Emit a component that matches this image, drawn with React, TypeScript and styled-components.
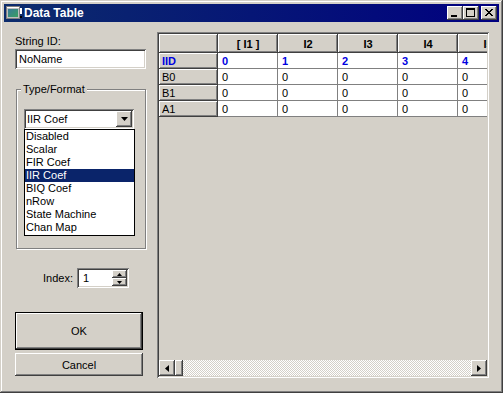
import React from "react";
import styled, { createGlobalStyle, css } from "styled-components";

const GlobalStyle = createGlobalStyle`
  html, body {
    margin: 0;
    padding: 0;
    background: #d4d0c8;
  }
  body {
    font-family: "Liberation Sans", Arial, sans-serif;
    font-size: 11px;
    color: #000;
  }
  * {
    box-sizing: border-box;
  }
`;

const raised = css`
  background: #d4d0c8;
  box-shadow: inset -1px -1px #404040, inset 1px 1px #fff,
    inset -2px -2px #808080, inset 2px 2px #d4d0c8;
`;

const sunken = css`
  box-shadow: inset 1px 1px #808080, inset -1px -1px #fff,
    inset 2px 2px #404040, inset -2px -2px #d4d0c8;
`;

const typeList = [
  "Disabled",
  "Scalar",
  "FIR Coef",
  "IIR Coef",
  "BIQ Coef",
  "nRow",
  "State Machine",
  "Chan Map",
];

const columns = ["[ I1 ]", "I2", "I3", "I4", "I5"];

const rows = [
  { label: "IID", values: ["0", "1", "2", "3", "4"], index: true },
  { label: "B0", values: ["0", "0", "0", "0", "0"] },
  { label: "B1", values: ["0", "0", "0", "0", "0"] },
  { label: "A1", values: ["0", "0", "0", "0", "0"] },
];

function AppIcon() {
  return (
    <svg width="16" height="16" viewBox="0 0 16 16">
      <rect x="0.5" y="1.5" width="13" height="12" fill="#c0c0c0" stroke="#808080" />
      <rect x="1" y="2" width="12" height="1" fill="#fff" />
      <defs>
        <linearGradient id="ig" x1="0" y1="0" x2="1" y2="1">
          <stop offset="0" stopColor="#3a7a9a" />
          <stop offset="1" stopColor="#3aa060" />
        </linearGradient>
      </defs>
      <rect x="2" y="4" width="10" height="8" fill="url(#ig)" />
      <rect x="14" y="3" width="2" height="6" fill="#fff" />
      <rect x="14" y="11" width="2" height="2" fill="#000" />
    </svg>
  );
}

export default function App() {
  return (
    <>
      <GlobalStyle />
      <Window>
        <TitleBar>
          <AppIcon />
          <Title>Data Table</Title>
          <TitleButtons>
            <TitleButton>
              <svg width="16" height="14" viewBox="0 0 16 14">
                <rect x="4" y="9" width="6" height="2" fill="#000" />
              </svg>
            </TitleButton>
            <TitleButton>
              <svg width="16" height="14" viewBox="0 0 16 14">
                <rect x="3.5" y="2.5" width="8" height="8" fill="none" stroke="#000" />
                <rect x="3" y="2" width="9" height="2" fill="#000" />
              </svg>
            </TitleButton>
            <TitleButton $close>
              <svg width="16" height="14" viewBox="0 0 16 14">
                <path d="M4 3 L11 10 M5 3 L12 10 M11 3 L4 10 M12 3 L5 10" stroke="#000" strokeWidth="1" />
              </svg>
            </TitleButton>
          </TitleButtons>
        </TitleBar>

        <Content>
          <LeftColumn>
            <FieldLabel>String ID:</FieldLabel>
            <TextBox>NoName</TextBox>

            <GroupBox>
              <Legend>Type/Format</Legend>
              <Combo>
                <ComboText>IIR Coef</ComboText>
                <ArrowButton $w={16} $h={16}>
                  <svg width="7" height="4" viewBox="0 0 7 4">
                    <path d="M0 0 H7 L3.5 4 Z" fill="#000" />
                  </svg>
                </ArrowButton>
              </Combo>
              <DropList>
                {typeList.map((t) => (
                  <ListItem key={t} $selected={t === "IIR Coef"}>
                    {t}
                  </ListItem>
                ))}
              </DropList>
            </GroupBox>

            <IndexRow>
              <span>Index:</span>
              <SpinBox>
                <SpinText>1</SpinText>
                <SpinButtons>
                  <ArrowButton $w={15} $h={8}>
                    <svg width="5" height="3" viewBox="0 0 5 3">
                      <path d="M0 3 H5 L2.5 0 Z" fill="#000" />
                    </svg>
                  </ArrowButton>
                  <ArrowButton $w={15} $h={8}>
                    <svg width="5" height="3" viewBox="0 0 5 3">
                      <path d="M0 0 H5 L2.5 3 Z" fill="#000" />
                    </svg>
                  </ArrowButton>
                </SpinButtons>
              </SpinBox>
            </IndexRow>

            <DefaultButton>
              <ButtonFace>OK</ButtonFace>
            </DefaultButton>
            <PushButton>Cancel</PushButton>
          </LeftColumn>

          <GridPanel>
            <GridArea>
              <Grid>
                <HeadCell />
                {columns.map((c) => (
                  <HeadCell key={c}>{c}</HeadCell>
                ))}
                {rows.map((r) => (
                  <React.Fragment key={r.label}>
                    <RowHead $index={r.index}>{r.label}</RowHead>
                    {r.values.map((v, i) => (
                      <Cell key={i} $index={r.index}>
                        {v}
                      </Cell>
                    ))}
                  </React.Fragment>
                ))}
              </Grid>
            </GridArea>
            <ScrollBar>
              <ArrowButton $w={16} $h={16}>
                <svg width="4" height="7" viewBox="0 0 4 7">
                  <path d="M4 0 V7 L0 3.5 Z" fill="#000" />
                </svg>
              </ArrowButton>
              <Thumb />
              <Track />
              <ArrowButton $w={16} $h={16}>
                <svg width="4" height="7" viewBox="0 0 4 7">
                  <path d="M0 0 V7 L4 3.5 Z" fill="#000" />
                </svg>
              </ArrowButton>
            </ScrollBar>
          </GridPanel>
        </Content>
      </Window>
    </>
  );
}

const Window = styled.div`
  width: 503px;
  height: 393px;
  padding: 4px;
  background: #d4d0c8;
  box-shadow: inset -1px -1px #404040, inset 1px 1px #d4d0c8,
    inset -2px -2px #808080, inset 2px 2px #fff;
  display: flex;
  flex-direction: column;
`;

const TitleBar = styled.div`
  height: 18px;
  display: flex;
  align-items: center;
  padding-left: 2px;
  background: linear-gradient(to right, #0c2c6c, #000080);
`;

const Title = styled.div`
  margin-left: 2px;
  color: #fff;
  font-weight: bold;
  font-size: 12px;
  line-height: 18px;
  flex: 1;
`;

const TitleButtons = styled.div`
  display: flex;
  padding-right: 2px;
`;

const TitleButton = styled.div<{ $close?: boolean }>`
  ${raised};
  width: 16px;
  height: 14px;
  display: flex;
  margin-left: ${({ $close }) => ($close ? "2px" : "0")};
`;

const Content = styled.div`
  flex: 1;
  display: flex;
  gap: 11px;
  padding: 0 10px 0 11px;
`;

const LeftColumn = styled.div`
  width: 131px;
  padding-top: 13px;
  display: flex;
  flex-direction: column;
`;

const FieldLabel = styled.div`
  line-height: 13px;
  height: 13px;
`;

const TextBox = styled.div`
  ${sunken};
  margin-top: 1px;
  height: 20px;
  background: #fff;
  padding: 0 4px;
  line-height: 20px;
`;

const GroupBox = styled.div`
  position: relative;
  margin: 20px 0 0 1px;
  width: 130px;
  height: 160px;
  border: 1px solid #808080;
  box-shadow: inset 1px 1px #fff, 1px 1px #fff;
  padding: 19px 0 0 7px;
`;

const Legend = styled.div`
  position: absolute;
  top: -7px;
  left: 4px;
  padding: 0 2px;
  line-height: 13px;
  background: #d4d0c8;
`;

const Combo = styled.div`
  ${sunken};
  width: 110px;
  height: 20px;
  background: #fff;
  display: flex;
  align-items: center;
  padding: 2px;
`;

const ComboText = styled.div`
  flex: 1;
  padding-left: 1px;
`;

const ArrowButton = styled.div<{ $w: number; $h: number }>`
  ${raised};
  width: ${({ $w }) => $w}px;
  height: ${({ $h }) => $h}px;
  display: flex;
  align-items: center;
  justify-content: center;
  flex-shrink: 0;
`;

const DropList = styled.div`
  width: 111px;
  border: 1px solid #000;
  background: #fff;
  padding: 0 0 1px;
`;

const ListItem = styled.div<{ $selected?: boolean }>`
  height: 13px;
  line-height: 13px;
  padding-left: 1px;
  background: ${({ $selected }) => ($selected ? "#0a246a" : "transparent")};
  color: ${({ $selected }) => ($selected ? "#fff" : "#000")};
`;

const IndexRow = styled.div`
  margin-top: 19px;
  padding-left: 28px;
  display: flex;
  align-items: center;
  gap: 4px;
`;

const SpinBox = styled.div`
  ${sunken};
  width: 52px;
  height: 20px;
  background: #fff;
  display: flex;
  align-items: center;
  padding: 2px;
`;

const SpinText = styled.div`
  flex: 1;
  padding-left: 4px;
`;

const SpinButtons = styled.div`
  display: flex;
  flex-direction: column;
`;

const DefaultButton = styled.div`
  margin-top: 24px;
  width: 128px;
  height: 38px;
  border: 1px solid #000;
  display: flex;
`;

const ButtonFace = styled.div`
  ${raised};
  flex: 1;
  display: flex;
  align-items: center;
  justify-content: center;
`;

const PushButton = styled.div`
  ${raised};
  margin-top: 3px;
  width: 128px;
  height: 23px;
  display: flex;
  align-items: center;
  justify-content: center;
`;

const GridPanel = styled.div`
  ${sunken};
  margin-top: 10px;
  width: 332px;
  height: 346px;
  padding: 2px;
  display: flex;
  flex-direction: column;
  background: #d4d0c8;
`;

const GridArea = styled.div`
  flex: 1;
  overflow: hidden;
`;

const Grid = styled.div`
  display: grid;
  grid-template-columns: 59px repeat(5, 60px);
  grid-template-rows: 19px repeat(4, 16px);
  font-family: "Liberation Sans", Arial, sans-serif;
  font-size: 11px;
`;

const HeadCell = styled.div`
  ${raised};
  font-weight: bold;
  display: flex;
  align-items: center;
  justify-content: center;
`;

const RowHead = styled.div<{ $index?: boolean }>`
  ${raised};
  display: flex;
  align-items: center;
  padding-left: 3px;
  font-weight: ${({ $index }) => ($index ? "bold" : "normal")};
  color: ${({ $index }) => ($index ? "#0000e0" : "#000")};
`;

const Cell = styled.div<{ $index?: boolean }>`
  background: #fff;
  border-right: 1px solid #808080;
  border-bottom: 1px solid #808080;
  display: flex;
  align-items: center;
  padding-left: 4px;
  font-weight: ${({ $index }) => ($index ? "bold" : "normal")};
  color: ${({ $index }) => ($index ? "#0000e0" : "#000")};
`;

const ScrollBar = styled.div`
  height: 16px;
  display: flex;
`;

const Thumb = styled.div`
  ${raised};
  width: 8px;
  height: 16px;
`;

const Track = styled.div`
  flex: 1;
  background: repeating-conic-gradient(#d4d0c8 0 25%, #fff 0 50%) 0 0 / 2px 2px;
`;
